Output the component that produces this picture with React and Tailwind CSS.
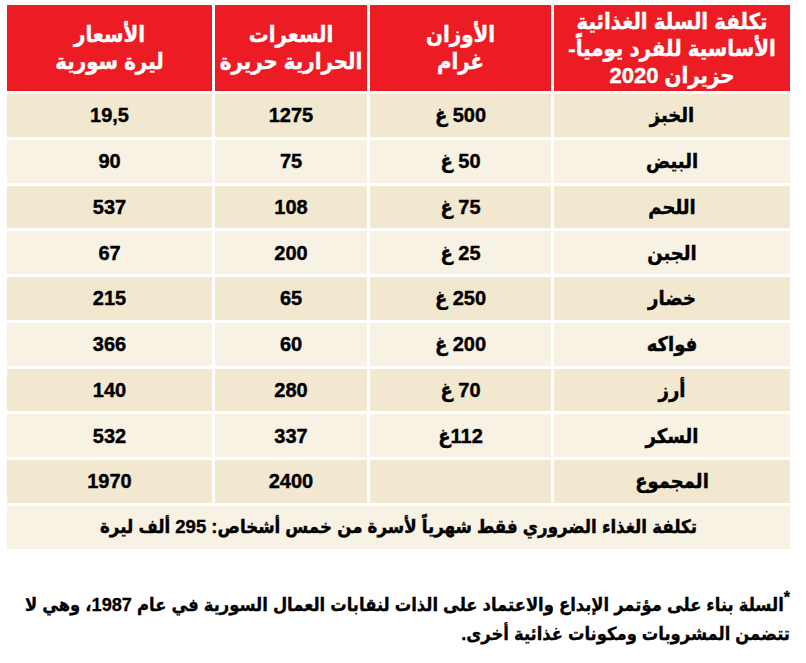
import React from 'react';

const rows = [
  { item: 'الخبز', weight: '500 غ', cal: '1275', price: '19,5' },
  { item: 'البيض', weight: '50 غ', cal: '75', price: '90' },
  { item: 'اللحم', weight: '75 غ', cal: '108', price: '537' },
  { item: 'الجبن', weight: '25 غ', cal: '200', price: '67' },
  { item: 'خضار', weight: '250 غ', cal: '65', price: '215' },
  { item: 'فواكه', weight: '200 غ', cal: '60', price: '366' },
  { item: 'أرز', weight: '70 غ', cal: '280', price: '140' },
  { item: 'السكر', weight: '112غ', cal: '337', price: '532' },
  { item: 'المجموع', weight: '', cal: '2400', price: '1970' },
];

const font = { fontFamily: '"Liberation Sans", "DejaVu Sans Condensed", "DejaVu Sans", sans-serif' };

const head = 'bg-[#ed1c24] h-[86px] flex items-center justify-center text-center text-white text-[22px] leading-[27px] [-webkit-text-stroke:0.4px_white]';
const cell = 'h-[42.75px] flex items-center justify-center text-[20px] text-black [-webkit-text-stroke:0.4px_black]';

const App = () => {
  return (
    <div className="w-[806px] h-[663px] bg-white pl-[7px] pt-[5px] font-bold" style={font}>
      <div dir="rtl" className="w-[783px] grid grid-cols-[236px_181px_152px_205px] gap-[3px]">
        {/* header */}
        <div className={head}>
          تكلفة السلة الغذائية<br />الأساسية للفرد يومياً-<br />حزيران 2020
        </div>
        <div className={head}>
          الأوزان<br />غرام
        </div>
        <div className={head}>
          السعرات<br />الحرارية حريرة
        </div>
        <div className={head}>
          الأسعار<br />ليرة سورية
        </div>

        {rows.map((r, i) => {
          const bg = i % 2 === 0 ? 'bg-[#f1e8cf]' : 'bg-[#f8f2e4]';
          return (
            <React.Fragment key={i}>
              <div className={`${bg} ${cell}`}>{r.item}</div>
              <div className={`${bg} ${cell}`}>{r.weight}</div>
              <div className={`${bg} ${cell}`}>{r.cal}</div>
              <div className={`${bg} ${cell}`}>{r.price}</div>
            </React.Fragment>
          );
        })}

        <div className="col-span-4 bg-[#f8f2e4] h-[43px] flex items-center justify-center text-[18.5px] text-black [-webkit-text-stroke:0.4px_black]">
          تكلفة الغذاء الضروري فقط شهرياً لأسرة من خمس أشخاص: 295 ألف ليرة
        </div>
      </div>

      <p dir="rtl" className="w-[783px] mt-[42px] text-[18.2px] leading-[29px] text-black whitespace-nowrap [-webkit-text-stroke:0.3px_black]">
        <sup className="text-[16px]">*</sup>السلة بناء على مؤتمر الإبداع والاعتماد على الذات لنقابات العمال السورية في عام 1987، وهي لا
        <br />
        تتضمن المشروبات ومكونات غذائية أخرى.
      </p>
    </div>
  );
};

export default App;
